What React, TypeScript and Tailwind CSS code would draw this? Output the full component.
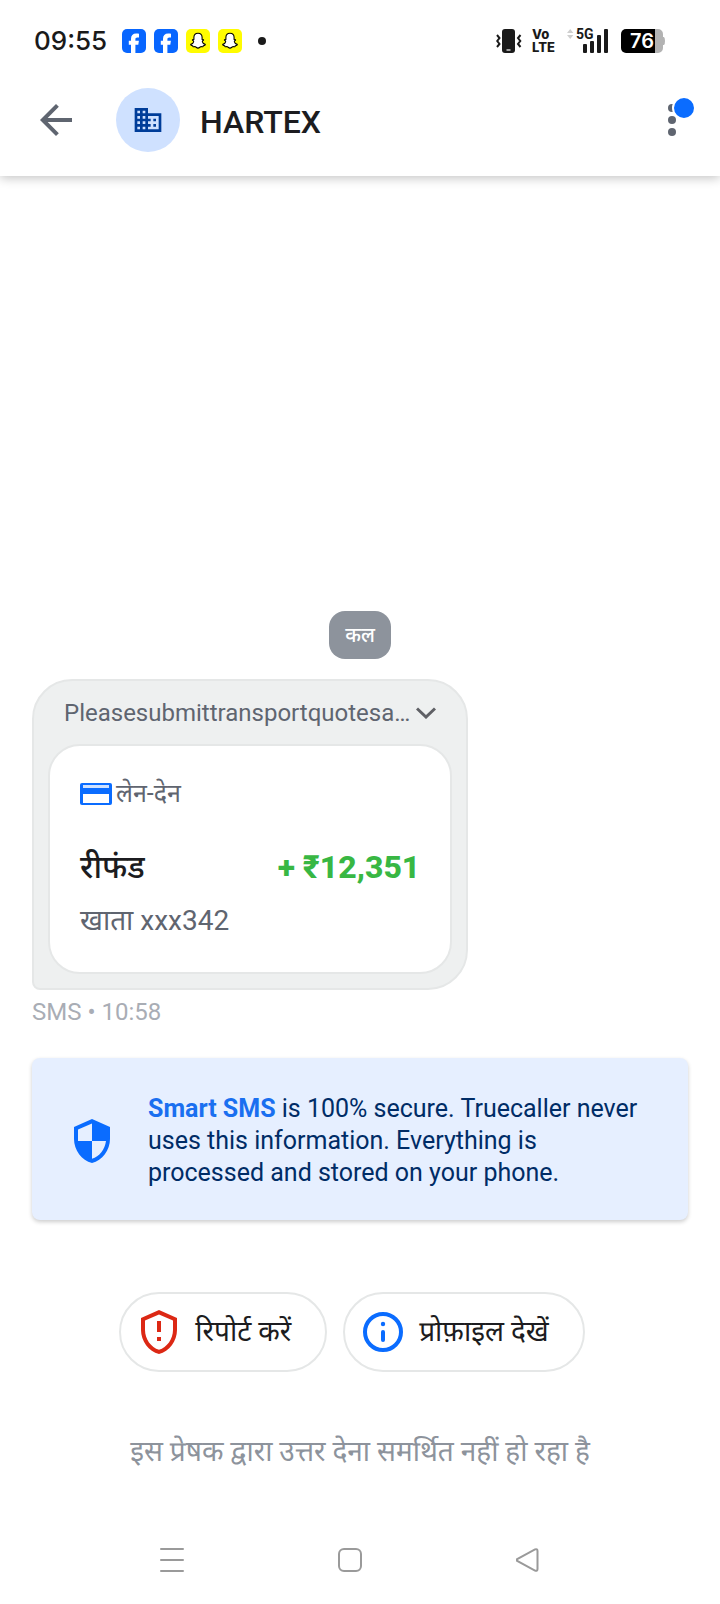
import type { ReactNode } from "react";

function FacebookIcon() {
  return (
    <svg className="w-6 h-6" viewBox="0 0 24 24">
      <rect width="24" height="24" rx="5" fill="#0866ff" />
      <path
        d="M9 24v-8.300H6.800v-3.900H9V10c0-3.600 1.900-5.500 5.200-5.500 1 0 2 .1 2.800.3v3.600h-1.600c-1.500 0-2 .7-2 1.900v1.500h3.500l-.6 3.900h-2.900V24z"
        fill="#fff"
      />
    </svg>
  );
}

function SnapchatIcon() {
  return (
    <svg className="w-6 h-6" viewBox="0 0 24 24">
      <rect width="24" height="24" rx="5" fill="#fffc00" />
      <path
        d="M12 4.300c2.600 0 4.100 1.800 4.100 4.200v2.100c.5.300 1.300-.2 1.500.3.200.6-1.400.9-1.300 1.700.3 1.400 1.700 2.500 3 2.800.3.800-1.100 1.100-1.900 1.300-.3.300-.1.900-.5 1-.8.100-1.500-.2-2.300.1-.8.400-1.400 1.300-2.600 1.300s-1.800-.9-2.600-1.300c-.8-.3-1.500 0-2.300-.1-.4-.1-.2-.7-.5-1-.8-.2-2.200-.5-1.900-1.300 1.300-.3 2.700-1.400 3-2.800.1-.8-1.500-1.100-1.300-1.700.2-.5 1 0 1.500-.3V8.500c0-2.400 1.500-4.200 4.100-4.200z"
        fill="#fff"
        stroke="#000"
        strokeWidth="1.100"
        strokeLinejoin="round"
      />
    </svg>
  );
}

function VibrateIcon() {
  return (
    <svg className="w-[26px] h-6" viewBox="0 0 26 24" fill="none" stroke="#1a1a1a">
      <rect x="6" y="0" width="13" height="24" rx="3" fill="#1a1a1a" stroke="none" />
      <path d="M10.500 21h4" stroke="#fff" strokeWidth="1.200" />
      <path d="M1 6l2.500 3L1.200 12l2.300 3L1 18" strokeWidth="2" />
      <path d="M24.500 6L22 9l2.300 3-2.300 3 2.500 3" strokeWidth="2" />
    </svg>
  );
}

function SignalIcon() {
  return (
    <svg className="w-[42px] h-8" viewBox="0 -4 42 32" fill="#1a1a1a">
      <path d="M0 4l3.200-4 3.200 4zM0 6h6.400l-3.200 4z" fill="#cfcfcf" />
      <text x="9" y="10" fontFamily="Roboto, sans-serif" fontSize="14" fontWeight="700">5G</text>
      <rect x="16" y="15" width="4" height="9" rx="1" />
      <rect x="23" y="12" width="4" height="12" rx="1" />
      <rect x="30" y="6" width="4" height="18" rx="1" />
      <rect x="37" y="0" width="4" height="24" rx="1" />
    </svg>
  );
}

function BatteryIcon() {
  return (
    <svg className="w-11 h-6" viewBox="0 0 44 24">
      <path d="M34 0h3a5 5 0 015 5v3h1q1 1 1 4t-1 4h-1v3a5 5 0 01-5 5h-3z" fill="#b3b3b3" />
      <path d="M5 0h29v24H5a5 5 0 01-5-5V5a5 5 0 015-5z" fill="#000" />
      <text x="21" y="19" fill="#fff" textAnchor="middle" fontFamily="Inter, sans-serif" fontSize="20" fontWeight="600">76</text>
    </svg>
  );
}

function StatusBar() {
  return (
    <div className="h-[72px] pt-[10px] pl-[34px] pr-[55px] flex items-center justify-between">
      <div className="flex items-center gap-2">
        <span className="mr-[7px] font-['Inter',sans-serif] text-[26px] leading-8 font-medium text-[#1a1a1a]">09:55</span>
        <FacebookIcon />
        <FacebookIcon />
        <SnapchatIcon />
        <SnapchatIcon />
        <span className="ml-2 w-2 h-2 rounded-full bg-[#1a1a1a]" />
      </div>
      <div className="flex items-center gap-3">
        <div className="flex items-center gap-[10px]">
          <VibrateIcon />
          <div className="font-['Inter',sans-serif] text-[13px] leading-[13px] font-extrabold text-[#1a1a1a]">
            <div>Vo</div>
            <div>LTE</div>
          </div>
        </div>
        <SignalIcon />
        <BatteryIcon />
      </div>
    </div>
  );
}

function Header() {
  return (
    <header className="shadow-[0_2px_10px_rgba(0,0,0,0.24)]">
      <StatusBar />
      <div className="h-[104px] pb-2 pl-8 pr-6 flex items-center">
        <button aria-label="Back" className="w-12 h-12 flex items-center justify-center">
          <svg className="w-12 h-12" viewBox="0 0 24 24" fill="#5f6570">
            <path d="M20 11H7.830l5.590-5.590L12 4l-8 8 8 8 1.410-1.410L7.830 13H20v-2z" />
          </svg>
        </button>
        <div className="ml-9 w-16 h-16 rounded-full bg-[#cfe1ff] flex items-center justify-center">
          <svg className="w-8 h-8" viewBox="0 0 24 24" fill="#003d99">
            <path d="M12 7V3H2v18h20V7H12zM6 19H4v-2h2v2zm0-4H4v-2h2v2zm0-4H4V9h2v2zm0-4H4V5h2v2zm4 12H8v-2h2v2zm0-4H8v-2h2v2zm0-4H8V9h2v2zm0-4H8V5h2v2zm10 12h-8v-2h2v-2h-2v-2h2v-2h-2V9h8v10zm-2-8h-2v2h2v-2zm0 4h-2v2h2v-2z" />
          </svg>
        </div>
        <h1 className="ml-5 mt-1 text-[32px] leading-10 font-medium text-[#1c1c20]">HARTEX</h1>
        <button aria-label="More options" className="ml-auto relative w-12 h-12">
          <svg className="w-12 h-12" viewBox="0 0 24 24" fill="#5f6570">
            <circle cx="12" cy="6" r="2" />
            <circle cx="12" cy="12" r="2" />
            <circle cx="12" cy="18" r="2" />
          </svg>
          <span className="absolute left-6 top-0 w-6 h-6 rounded-full border-2 border-white bg-[#0a6cff]" />
        </button>
      </div>
    </header>
  );
}

function MessageBubble() {
  return (
    <div className="w-fit max-w-full px-[14px] pb-[14px] rounded-[40px] rounded-bl-lg border-2 border-[#e5e7e7] bg-[#eef0f0]">
      <button className="h-[63px] px-4 flex items-center gap-[6px] text-2xl text-[#5f6570]">
        Pleasesubmittransportquotesa…
        <svg className="w-5 h-3" viewBox="0 0 20 12" fill="none" stroke="#5f6065" strokeWidth="3">
          <path d="M1 1.500l9 8.500 9-8.500" />
        </svg>
      </button>
      <div className="pt-8 pb-[33px] px-[30px] rounded-[32px] border-2 border-[#e5e7e7] bg-white">
        <div className="flex items-center gap-1 text-[25px] leading-8 text-[#5f6570]">
          <svg className="w-8 h-[22px]" viewBox="0 0 32 22">
            <rect width="32" height="22" rx="2" fill="#0a6cff" />
            <rect x="3" y="2" width="26" height="3" fill="#cfe1ff" />
            <rect x="3" y="11" width="26" height="9" fill="#fff" />
          </svg>
          लेन-देन
        </div>
        <div className="mt-[37px] flex items-center justify-between text-[32px] leading-10">
          <span className="font-medium text-[#1c1c20]">रीफंड</span>
          <span className="font-extrabold text-[#38b743]">+ ₹12,351</span>
        </div>
        <div className="mt-4 text-[28px] leading-9 text-[#5f6570]">खाता xxx342</div>
      </div>
    </div>
  );
}

function SecureBanner() {
  return (
    <div className="mt-8 pt-[35px] pb-[31px] pl-9 pr-8 flex items-center gap-8 rounded-lg bg-[#e6efff] shadow-[0_2px_4px_rgba(0,0,0,0.2)]">
      <svg className="shrink-0 w-12 h-12" viewBox="0 0 24 24" fill="#0a6cff">
        <path d="M12 1L3 5v6c0 5.550 3.840 10.740 9 12 5.160-1.260 9-6.450 9-12V5l-9-4zm0 10.990h7c-.53 4.120-3.280 7.790-7 8.940V12H5V6.300l7-3.110v8.800z" />
      </svg>
      <p className="text-[25px] leading-8 text-[#002c66]">
        <strong className="font-bold text-[#1a6ff0]">Smart SMS</strong> is 100% secure. Truecaller never
        <br />
        uses this information. Everything is
        <br />
        processed and stored on your phone.
      </p>
    </div>
  );
}

function PillButton({ icon, children }: { icon: ReactNode; children: ReactNode }) {
  return (
    <button className="h-20 pl-[14px] pr-[34px] flex items-center gap-3 rounded-full border-2 border-[#e5e7e7] text-[28px] leading-9 text-[#1c1c20]">
      {icon}
      {children}
    </button>
  );
}

function NavBar() {
  return (
    <nav className="h-[88px] pl-[148px] pr-[168px] flex items-center justify-between">
      <button aria-label="Recent apps" className="w-12 h-12 flex items-center justify-center">
        <svg className="w-6 h-6" viewBox="0 0 24 24" stroke="#9a9a9a" strokeWidth="2" strokeLinecap="round">
          <path d="M1 1h22M1 12h22M1 23h22" />
        </svg>
      </button>
      <button aria-label="Home" className="w-12 h-12 flex items-center justify-center">
        <svg className="w-6 h-6" viewBox="0 0 24 24" fill="none" stroke="#9a9a9a" strokeWidth="2">
          <rect x="1" y="1" width="22" height="22" rx="5" />
        </svg>
      </button>
      <button aria-label="Back" className="w-12 h-12 flex items-center justify-center">
        <svg className="w-6 h-6" viewBox="0 0 24 24" fill="none" stroke="#9a9a9a" strokeWidth="2">
          <path d="M1.200 11q-1.200 1 0 2L19 22.600q2.500.8 2.500-1.600V3q0-2.400-2.500-1.600z" />
        </svg>
      </button>
    </nav>
  );
}

export default function App() {
  return (
    <div className="min-h-screen flex flex-col bg-white font-['Roboto','Noto_Sans_Devanagari','Noto_Sans',sans-serif]">
      <Header />

      {/* Conversation */}
      <main className="flex-1 px-8 flex flex-col justify-end">
        <div className="mb-5 self-center h-12 px-4 flex items-center rounded-2xl bg-[#8d939c] text-xl font-medium text-white">
          कल
        </div>
        <MessageBubble />
        <div className="mt-2 text-2xl leading-7 text-[#a9adb5]">SMS • 10:58</div>
        <SecureBanner />
      </main>

      {/* Sender actions */}
      <div className="mt-[72px] pr-4 flex justify-center gap-4">
        <PillButton
          icon={
            <svg className="w-12 h-12" viewBox="0 0 24 24" fill="#dc2814">
              <path d="M12 1L3 5v6c0 5.550 3.840 10.740 9 12 5.160-1.260 9-6.450 9-12V5l-9-4zm7 10c0 4.520-2.980 8.690-7 9.930-4.020-1.240-7-5.410-7-9.930V6.300l7-3.110 7 3.110V11zm-8 3.500h2v2h-2zm0-8h2v5.500h-2z" />
            </svg>
          }
        >
          रिपोर्ट करें
        </PillButton>
        <PillButton
          icon={
            <svg className="w-12 h-12" viewBox="0 0 24 24" fill="none" stroke="#0a6cff" strokeWidth="2">
              <circle cx="12" cy="12" r="9" />
              <path d="M12 12v4" strokeLinecap="round" />
              <circle cx="12" cy="8" r="1.100" fill="#0a6cff" stroke="none" />
            </svg>
          }
        >
          प्रोफ़ाइल देखें
        </PillButton>
      </div>
      <p className="mt-[60px] mb-11 px-8 text-center text-[28px] leading-10 text-[#8d939c]">
        इस प्रेषक द्वारा उत्तर देना समर्थित नहीं हो रहा है
      </p>

      <NavBar />
    </div>
  );
}
